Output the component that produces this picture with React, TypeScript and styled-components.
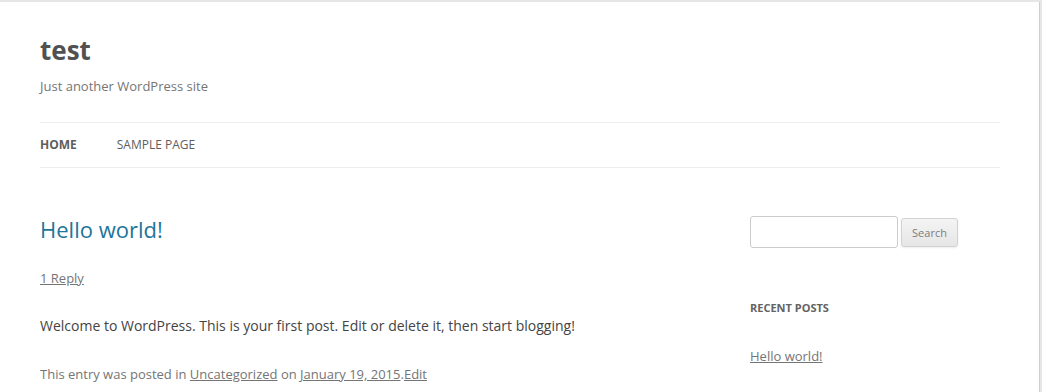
import React from "react";
import styled, { createGlobalStyle } from "styled-components";

const Global = createGlobalStyle`
  html, body { margin: 0; padding: 0; }
  body {
    background: #e6e6e6;
    font-family: "Open Sans", "Liberation Sans", sans-serif;
    color: #444;
    overflow: hidden;
  }
`;

const Page = styled.div`
  margin-top: 2px;
  width: 1039px;
  min-height: 400px;
  background: #fff;
  box-shadow: 1px 0 0 #cfcfcf;
  padding: 0 40px;
  box-sizing: border-box;
`;

const Header = styled.header`
  padding-top: 30px;
`;

const SiteTitle = styled.h1`
  margin: 0;
  font-size: 26px;
  line-height: 36px;
  font-weight: 700;
  color: #515151;
`;

const Description = styled.h2`
  margin: 6px 0 0;
  font-size: 13px;
  line-height: 24px;
  font-weight: 400;
  color: #757575;
`;

const Nav = styled.nav`
  margin-top: 24px;
  width: 960px;
  border-top: 1px solid #ededed;
  border-bottom: 1px solid #ededed;
  display: flex;
  gap: 40px;
  height: 44px;
  align-items: center;
`;

const NavItem = styled.a<{ $current?: boolean }>`
  font-size: 12px;
  line-height: 44px;
  text-transform: uppercase;
  color: #5e5e5e;
  font-weight: ${(p) => (p.$current ? 700 : 400)};
  text-decoration: none;
`;

const Main = styled.div`
  width: 960px;
  display: flex;
  justify-content: space-between;
  padding-top: 47px;
`;

const Primary = styled.div`
  width: 625px;
`;

const EntryTitle = styled.h1`
  margin: -1px 0 0;
  font-size: 22px;
  line-height: 30px;
  font-weight: 400;
  a {
    color: #21759b;
    text-decoration: none;
  }
`;

const Comments = styled.div`
  margin-top: 23px;
  font-size: 13px;
  line-height: 22px;
  a { color: #757575; text-decoration: underline; }
`;

const Content = styled.p`
  margin: 25px 0 0;
  font-size: 14px;
  line-height: 24px;
  color: #444;
`;

const Meta = styled.footer`
  margin-top: 25px;
  font-size: 13px;
  line-height: 22px;
  color: #757575;
  a { color: #757575; text-decoration: underline; }
`;

const Secondary = styled.aside`
  width: 250px;
  padding-top: 1px;
`;

const SearchForm = styled.form`
  display: flex;
  align-items: center;
  gap: 3px;
`;

const SearchInput = styled.input`
  width: 148px;
  height: 32px;
  box-sizing: border-box;
  border: 1px solid #ccc;
  border-radius: 3px;
  padding: 6px;
  font-family: inherit;
  font-size: 12px;
  background: #fff;
`;

const SearchButton = styled.button`
  height: 29px;
  width: 57px;
  box-sizing: border-box;
  border: 1px solid #d2d2d2;
  border-radius: 3px;
  background: linear-gradient(to bottom, #f4f4f4, #e6e6e6);
  box-shadow: 0 1px 2px rgba(64, 64, 64, 0.1);
  color: #7c7c7c;
  font-family: inherit;
  font-size: 11px;
  line-height: 1;
  padding: 0;
`;

const WidgetTitle = styled.h3`
  margin: 48px 0 0;
  font-size: 11px;
  line-height: 24px;
  font-weight: 700;
  text-transform: uppercase;
  color: #636363;
`;

const WidgetList = styled.ul`
  list-style: none;
  margin: 24px 0 0;
  padding: 0;
  font-size: 13px;
  line-height: 24px;
  a { color: #757575; text-decoration: underline; }
`;

export default function App() {
  return (
    <>
      <Global />
      <Page>
        <Header>
          <SiteTitle>test</SiteTitle>
          <Description>Just another WordPress site</Description>
          <Nav>
            <NavItem $current>Home</NavItem>
            <NavItem>Sample Page</NavItem>
          </Nav>
        </Header>
        <Main>
          <Primary>
            <EntryTitle>
              <a>Hello world!</a>
            </EntryTitle>
            <Comments>
              <a>1 Reply</a>
            </Comments>
            <Content>
              Welcome to WordPress. This is your first post. Edit or delete it, then start blogging!
            </Content>
            <Meta>
              This entry was posted in <a>Uncategorized</a> on <a>January 19, 2015</a>.<a>Edit</a>
            </Meta>
          </Primary>
          <Secondary>
            <SearchForm onSubmit={(e) => e.preventDefault()}>
              <SearchInput type="text" />
              <SearchButton type="submit">Search</SearchButton>
            </SearchForm>
            <WidgetTitle>Recent Posts</WidgetTitle>
            <WidgetList>
              <li>
                <a>Hello world!</a>
              </li>
            </WidgetList>
          </Secondary>
        </Main>
      </Page>
    </>
  );
}
